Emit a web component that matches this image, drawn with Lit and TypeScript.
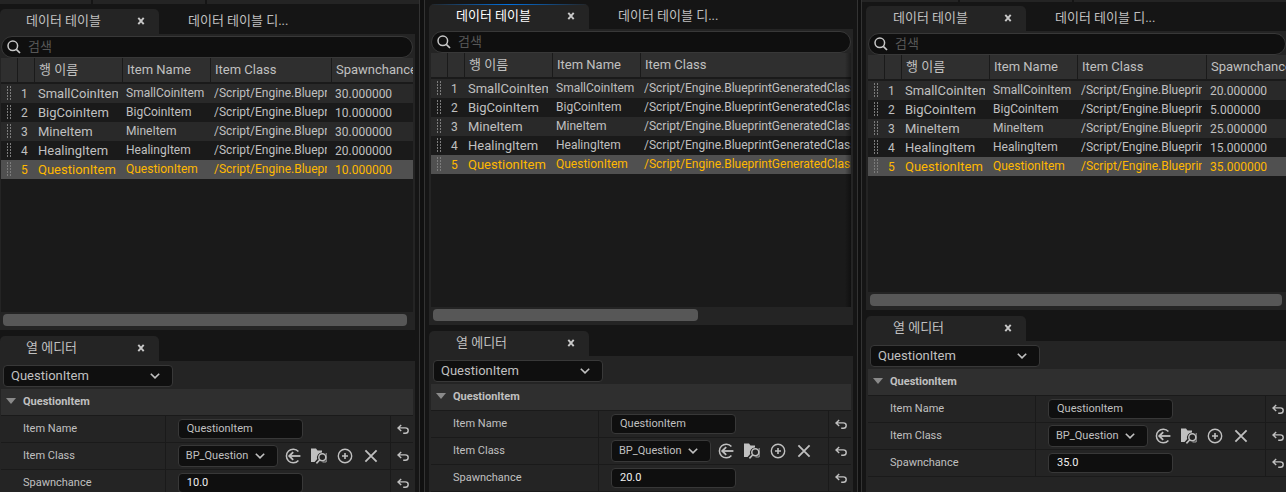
import { LitElement, html, css, svg, nothing } from "lit";
import { customElement, property } from "lit/decorators.js";
import { classMap } from "lit/directives/class-map.js";
import { styleMap } from "lit/directives/style-map.js";

interface Item {
  name: string;
  chance: string;
}

interface EditorData {
  id: string;
  kind: string;
  focused: boolean;
  toolbar: boolean;
  showChance: boolean;
  split: number;
  thumb: number;
  classWidth: number;
  items: Item[];
  value: string;
}

const NAMES = ["SmallCoinItem", "BigCoinItem", "MineItem", "HealingItem", "QuestionItem"];
const CLASS_PATH = "/Script/Engine.BlueprintGeneratedClass";

const withChances = (values: string[]): Item[] =>
  NAMES.map((name, i) => ({ name, chance: values[i] }));

const EDITORS: EditorData[] = [
  {
    id: "a", kind: "first", focused: false, toolbar: true, showChance: true,
    split: 321, thumb: 99.5, classWidth: 121,
    items: withChances(["30.000000", "10.000000", "30.000000", "20.000000", "10.000000"]),
    value: "10.0",
  },
  {
    id: "b", kind: "second", focused: true, toolbar: false, showChance: false,
    split: 321, thumb: 64, classWidth: 0,
    items: withChances(["", "", "", "", ""]),
    value: "20.0",
  },
  {
    id: "c", kind: "third", focused: false, toolbar: true, showChance: true,
    split: 304, thumb: 100, classWidth: 129,
    items: withChances(["20.000000", "5.000000", "25.000000", "15.000000", "35.000000"]),
    value: "35.0",
  },
];

const closeIcon = svg`<svg width="8" height="8" viewBox="0 0 8 8" aria-hidden="true">
  <path d="M1.3 .8L6.7 7.2M6.7 .8L1.3 7.2" stroke="currentColor" stroke-width="1.9" fill="none"/></svg>`;

const searchIcon = svg`<svg width="14" height="14" viewBox="0 0 14 14" aria-hidden="true">
  <circle cx="5.8" cy="5.8" r="4.8" stroke="currentColor" stroke-width="1.5" fill="none"/>
  <path d="M9.3 9.3L13 13" stroke="currentColor" stroke-width="1.7"/></svg>`;

const chevron = svg`<svg class="chevron" width="10" height="6" viewBox="0 0 10 6" aria-hidden="true">
  <path d="M.8 .8L5 4.9L9.2 .8" stroke="currentColor" stroke-width="1.6" fill="none"/></svg>`;

const resetIcon = svg`<svg width="12" height="11" viewBox="0 0 12 11" aria-hidden="true">
  <path d="M4.2 .9L1 3.9L4.2 6.9M1.2 3.9H8.3C10.3 3.9 11.2 5 11.2 6.5C11.2 8.3 10 9.3 8.3 9.3H6.2"
    stroke="currentColor" stroke-width="1.4" fill="none"/></svg>`;

const useIcon = svg`<svg width="16" height="16" viewBox="0 0 16 16" aria-hidden="true">
  <path d="M13.4 3.6A6.8 6.8 0 1 0 13.4 12.4" stroke="currentColor" stroke-width="1.5" fill="none"/>
  <path d="M4.2 8H15.4" stroke="currentColor" stroke-width="1.8"/>
  <path d="M8.2 4.2L4.2 8L8.2 11.8" stroke="currentColor" stroke-width="1.8" fill="none"/></svg>`;

const browseIcon = svg`<svg width="16" height="16" viewBox="0 0 16 16" aria-hidden="true">
  <path d="M0 .5H5L6.5 2.5H11V4.6A5 5 0 0 0 6.2 11L3.6 14H0Z" fill="currentColor"/>
  <circle cx="11.3" cy="9.2" r="3.5" stroke="currentColor" stroke-width="1.5" fill="none"/>
  <path d="M8.8 11.8L5.4 15.4" stroke="currentColor" stroke-width="1.6"/>
  <path d="M11.5 14H15.2V5" stroke="currentColor" stroke-width=".8" fill="none"/></svg>`;

const addIcon = svg`<svg width="16" height="16" viewBox="0 0 16 16" aria-hidden="true">
  <circle cx="8" cy="8" r="6.7" stroke="currentColor" stroke-width="1.4" fill="none"/>
  <path d="M8 5V11M5 8H11" stroke="currentColor" stroke-width="1.6"/></svg>`;

const clearIcon = svg`<svg width="16" height="16" viewBox="0 0 16 16" aria-hidden="true">
  <path d="M2.4 2.4L13.6 13.6M13.6 2.4L2.4 13.6" stroke="currentColor" stroke-width="1.8"/></svg>`;

const shared = css`
  * { box-sizing: border-box; }
  button, input, select {
    font: inherit;
    color: inherit;
    margin: 0;
    padding: 0;
    border: 0;
    background: none;
    border-radius: 0;
    outline: none;
    min-width: 0;
  }
  svg { display: block; flex: none; }
`;

@customElement("data-grid")
export class DataGrid extends LitElement {
  @property({ attribute: false }) data!: EditorData;

  static styles = [shared, css`
    :host {
      display: flex;
      flex-direction: column;
      flex: 1;
      min-height: 0;
    }
    .search {
      display: flex;
      align-items: center;
      gap: 7px;
      height: 22px;
      margin-top: 2px;
      flex: none;
      padding: 0 5px;
      border: 1px solid #383838;
      border-radius: 11px;
      background: #0f0f0f;
      color: #c8c8c8;
    }
    .query { flex: 1; font-size: 13px; line-height: 18px; }
    .query::placeholder { color: #575757; opacity: 1; }
    .viewport {
      flex: 1;
      min-height: 0;
      overflow: hidden;
      background: #1a1a1a;
      position: relative;
    }
    .viewport.more::after {
      content: "";
      position: absolute;
      top: 0;
      right: 0;
      bottom: 0;
      width: 6px;
      background: linear-gradient(to right, transparent, rgba(0, 0, 0, 0.4));
    }
    table {
      width: 100%;
      table-layout: fixed;
      border-collapse: separate;
      border-spacing: 0;
    }
    .narrow { width: 17px; }
    .wide { width: 88px; }
    th, td {
      padding: 0;
      text-align: left;
      font-weight: 400;
      white-space: nowrap;
      overflow: hidden;
    }
    th {
      height: 26px;
      padding-left: 4px;
      background: #2f2f2f;
      border-right: 1px solid #1a1a1a;
      border-bottom: 2px solid #1a1a1a;
      font-size: 13px;
      line-height: 24px;
    }
    th:last-child { border-right: 0; }
    td {
      height: 19px;
      padding: 0 5px 0 3px;
      font-size: 12px;
      line-height: 18px;
    }
    td:last-child { padding-right: 0; }
    .name { font-size: 13px; line-height: 19px; }
    .clip { display: block; overflow: hidden; height: 19px; }
    tbody tr:nth-child(odd) { background: #292929; }
    tbody .selected:nth-child(odd) { background: #505050; color: #ffb800; }
    .handle {
      display: block;
      width: 4px;
      height: 15px;
      margin-left: 3px;
      color: #7c7c7c;
      background:
        repeating-linear-gradient(to bottom, currentColor 0 2px, transparent 2px 3px) 0 0 / 1px 100% no-repeat,
        repeating-linear-gradient(to bottom, currentColor 0 2px, transparent 2px 3px) 3px 0 / 1px 100% no-repeat;
    }
    .scroll { flex: none; padding: 2px 4px 4px 2px; }
    .thumb { height: 12px; border-radius: 4px; background: #575757; }
  `];

  render() {
    const d = this.data;
    return html`
      <div class="search">
        ${searchIcon}
        <input class="query" type="search" placeholder="검색" aria-label="검색">
      </div>
      <div class=${classMap({ viewport: true, more: !d.showChance })}>
        <table>
          <colgroup>
            <col class="narrow"><col class="narrow"><col class="wide"><col class="wide">
            ${d.showChance
              ? html`<col style=${styleMap({ width: `${d.classWidth}px` })}><col>`
              : html`<col>`}
          </colgroup>
          <thead>
            <tr>
              <th></th><th></th><th>행 이름</th><th>Item Name</th><th>Item Class</th>
              ${d.showChance ? html`<th>Spawnchance</th>` : nothing}
            </tr>
          </thead>
          <tbody>
            ${d.items.map((item, i) => html`
              <tr class=${classMap({ selected: i === d.items.length - 1 })}>
                <td><span class="handle"></span></td>
                <td>${i + 1}</td>
                <td class="name"><span class="clip">${item.name}</span></td>
                <td><span class="clip">${item.name}</span></td>
                <td><span class="clip">${CLASS_PATH}</span></td>
                ${d.showChance ? html`<td>${item.chance}</td>` : nothing}
              </tr>`)}
          </tbody>
        </table>
      </div>
      <div class="scroll">
        <div class="thumb" style=${styleMap({ width: `${d.thumb}%` })}></div>
      </div>`;
  }
}

@customElement("row-editor")
export class RowEditor extends LitElement {
  @property({ attribute: false }) data!: EditorData;

  static styles = [shared, css`
    :host { display: block; font-size: 11px; }
    .combo {
      display: grid;
      align-items: center;
      height: 22px;
      border: 1px solid #383838;
      border-radius: 4px;
      background: #0f0f0f;
    }
    .combo select {
      grid-area: 1 / 1;
      appearance: none;
      width: 100%;
      height: 20px;
      padding: 0 20px 0 7px;
      line-height: 18px;
    }
    .combo .chevron {
      grid-area: 1 / 1;
      justify-self: end;
      margin-right: 12px;
      pointer-events: none;
    }
    .picker { width: 170px; margin: 4px 2px 2px; font-size: 13px; }
    .asset { width: 100px; }
    .asset .chevron { margin-right: 12px; }
    .category {
      display: flex;
      align-items: center;
      gap: 7px;
      width: 100%;
      height: 27px;
      padding: 0 5px 2px;
      background: #2f2f2f;
      border-bottom: 1px solid #1a1a1a;
      font-weight: 700;
      text-align: left;
    }
    .arrow { color: #8a8a8a; }
    .row {
      display: grid;
      grid-template-columns: calc(40% - 1px) minmax(0, 1fr) 23px;
      height: 27px;
      border-bottom: 1px solid #1a1a1a;
    }
    .label { padding-left: 22px; line-height: 25px; }
    .value {
      display: flex;
      align-items: center;
      padding-left: 12px;
      border-left: 1px solid #1a1a1a;
    }
    .text {
      width: 125px;
      height: 20px;
      padding: 0 8px 2px;
      border: 1px solid #383838;
      border-radius: 4px;
      background: #0f0f0f;
    }
    .number { color: #f0f0f0; }
    .actions { display: flex; margin-left: 2px; }
    .action { width: 26px; height: 22px; display: grid; place-items: center; }
    .reset {
      display: grid;
      align-items: center;
      padding-left: 6px;
      border-left: 1px solid #1a1a1a;
    }
  `];

  private row(id: string, label: string, control: unknown) {
    return html`
      <div class="row">
        <label class="label" for=${id}>${label}</label>
        <div class="value">${control}</div>
        <button class="reset" aria-label="Reset">${resetIcon}</button>
      </div>`;
  }

  render() {
    return html`
      <div class="combo picker">
        <select aria-label="Row">
          ${NAMES.map((n) => html`<option ?selected=${n === "QuestionItem"}>${n}</option>`)}
        </select>
        ${chevron}
      </div>
      <button class="category">
        <svg class="arrow" width="10" height="6" viewBox="0 0 10 6" aria-hidden="true">
          <path d="M0 0H10L5 6Z" fill="currentColor"/>
        </svg>
        QuestionItem
      </button>
      ${this.row("name", "Item Name", html`<input id="name" class="text" type="text" value="QuestionItem">`)}
      ${this.row("class", "Item Class", html`
        <div class="combo asset">
          <select id="class"><option>BP_Question</option></select>
          ${chevron}
        </div>
        <div class="actions">
          <button class="action" aria-label="Use selected">${useIcon}</button>
          <button class="action" aria-label="Browse">${browseIcon}</button>
          <button class="action" aria-label="New">${addIcon}</button>
          <button class="action" aria-label="Clear">${clearIcon}</button>
        </div>`)}
      ${this.row("chance", "Spawnchance", html`
        <input id="chance" class="text number" type="text" inputmode="decimal" value=${this.data.value}>`)}
    `;
  }
}

@customElement("editor-window")
export class EditorWindow extends LitElement {
  @property({ attribute: false }) data!: EditorData;

  static styles = [shared, css`
    :host { display: block; min-width: 0; }
    .window {
      display: flex;
      flex-direction: column;
      height: 100%;
      padding: 4px 4px 0;
      overflow: hidden;
    }
    .first { padding: 0 4px 0 0; }
    .third { padding: 0 0 0 4px; }
    .toolbar { display: flex; gap: 2px; flex: none; height: 4px; margin-bottom: 5px; }
    .toolbar span { width: 112px; background: #242424; }
    .toolbar span:first-child { width: 91px; }
    .toolbar span:last-child { flex: 1; }
    .first .toolbar { margin-right: -4px; }
    .third .toolbar { height: 2px; margin: 0 0 4px -4px; }
    .third .toolbar span:first-child { width: 96px; }
    .pane { display: flex; flex-direction: column; flex: none; }
    .editor { flex: 1; margin-top: 6px; }
    .tabs { display: flex; flex: none; height: 25px; }
    .tab {
      display: flex;
      align-items: center;
      justify-content: space-between;
      width: 160px;
      padding: 0 14px 2px 27px;
      border-radius: 5px 5px 0 0;
      background: #242424;
      font-size: 13px;
      line-height: 20px;
    }
    .first .tab { width: 159px; padding-left: 26px; }
    .tab.focused {
      color: #fff;
      background:
        linear-gradient(to right, transparent, #0070e0 50%, transparent) 0 0 / 100% 1px no-repeat,
        #242424;
    }
    .tab.idle, .first .tab.idle { width: auto; padding-left: 29px; background: none; }
    .close { color: #c8c8c8; }
    .body {
      display: flex;
      flex-direction: column;
      flex: 1;
      min-height: 0;
      padding: 0 2px;
      background: #242424;
    }
    .first .body { padding-left: 1px; }
    .third .body { padding-right: 0; }
    .editor .body { display: block; }
    .third .editor { margin-right: -2px; }
  `];

  render() {
    const d = this.data;
    return html`
      <section class=${`window ${d.kind}`}>
        ${d.toolbar ? html`<div class="toolbar"><span></span><span></span><span></span></div>` : nothing}
        <div class="pane" style=${styleMap({ height: `${d.split}px` })}>
          <div class="tabs">
            <div class=${classMap({ tab: true, focused: d.focused })}>
              <span>데이터 테이블</span>
              <button class="close" aria-label="Close">${closeIcon}</button>
            </div>
            <div class="tab idle"><span>데이터 테이블 디...</span></div>
          </div>
          <div class="body"><data-grid .data=${d}></data-grid></div>
        </div>
        <div class="pane editor">
          <div class="tabs">
            <div class="tab">
              <span>열 에디터</span>
              <button class="close" aria-label="Close">${closeIcon}</button>
            </div>
          </div>
          <div class="body"><row-editor .data=${d}></row-editor></div>
        </div>
      </section>`;
  }
}

@customElement("app-root")
export class AppRoot extends LitElement {
  static styles = css`
    :host {
      display: grid;
      grid-template-columns: 419fr 6px 432fr 5px 424fr;
      height: 100vh;
      overflow: hidden;
      background: #151515;
      color: #c0c0c0;
      font-family: Roboto, "Noto Sans CJK KR", sans-serif;
      font-size: 13px;
    }
    .divider {
      background: #101010;
      border: solid #333;
      border-width: 0 1px;
    }
  `;

  render() {
    return EDITORS.map((data, i) => html`
      ${i > 0 ? html`<div class="divider"></div>` : nothing}
      <editor-window .data=${data}></editor-window>`);
  }
}
